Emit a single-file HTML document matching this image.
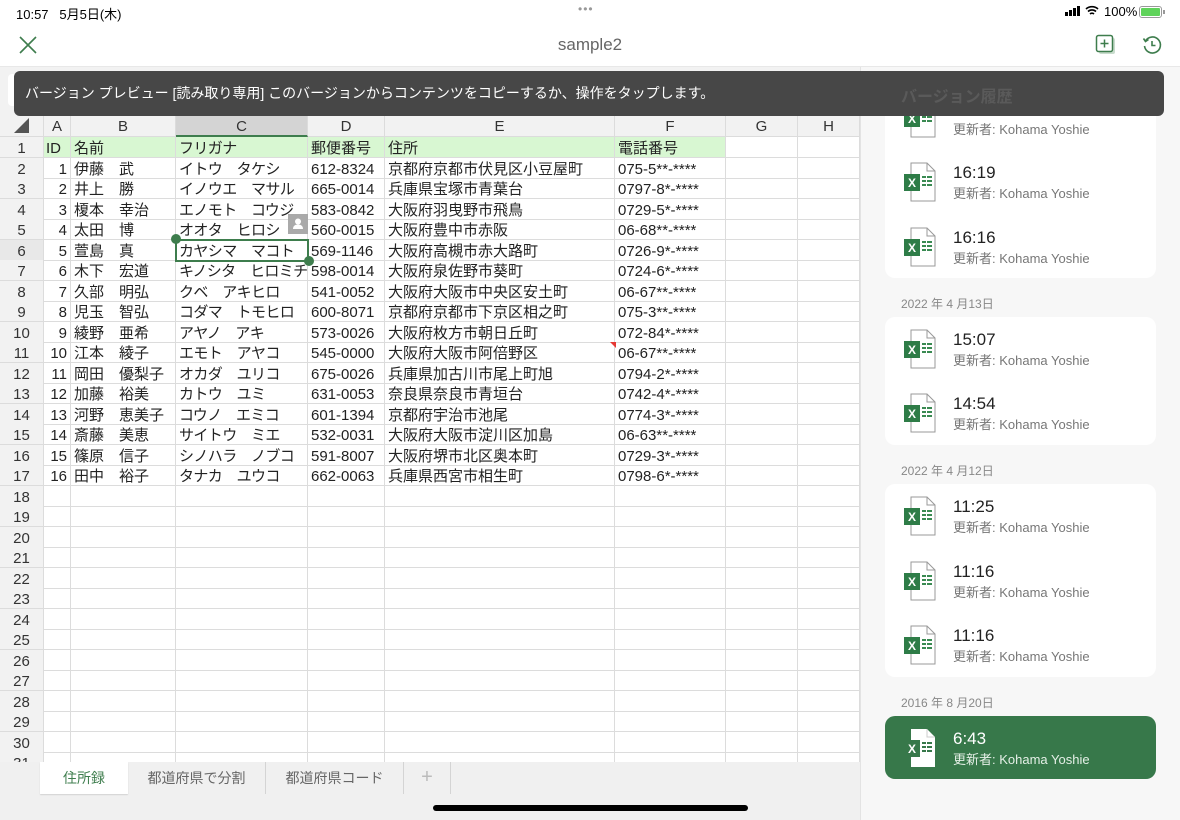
<!DOCTYPE html>
<html><head><meta charset="utf-8"><style>
*{box-sizing:border-box;margin:0;padding:0}
body{width:1180px;height:820px;overflow:hidden;background:#fff;font-family:"Liberation Sans","Noto Sans CJK JP",sans-serif;position:relative;color:#222}
.abs{position:absolute}
.row{position:absolute;left:0;height:21px;display:flex;width:860px}
.row div{height:21px;border-right:1px solid #dcdcdc;border-bottom:1px solid #dcdcdc;font-size:15px;line-height:24px;white-space:nowrap;overflow:hidden;padding-left:3px}
.c0{width:44px;background:#f2f2f2;text-align:center;padding-left:0!important;color:#333}
.c1{width:27px;text-align:right;padding-right:3px}
.c2{width:105px}.c3{width:132px;letter-spacing:-0.6px}.c4{width:77px}.c5{width:230px}.c6{width:111px}.c7{width:72px}.c8{width:62px}
.hdr div{background:#f2f2f2;text-align:center;padding-left:0;color:#333;height:22px;letter-spacing:0}
.g div{background:#d8f7d2}
.g div.c0,.g div.c7,.g div.c8{background:#fff}
.g div.c0{background:#f2f2f2}
.card{position:absolute;left:885px;width:271px;background:#fff;border-radius:10px}
.it{position:absolute;left:0;width:271px;height:64px}
.it .t{position:absolute;left:68px;top:13px;font-size:17px;color:#222}
.it .s{position:absolute;left:68px;top:33px;font-size:13px;color:#777}
.it svg{position:absolute;left:18px;top:12px}
.dt{position:absolute;left:901px;font-size:12px;color:#888}
</style></head><body>
<div class="abs" style="left:16px;top:4px;font-size:13px;color:#000">10:57&nbsp;&nbsp; 5月5日(木)</div>
<div class="abs" style="left:578px;top:2px;font-size:12px;color:#999;letter-spacing:1px">•••</div>
<div class="abs" style="left:1065px;top:6px;width:17px;height:10px">
<div class="abs" style="left:0;top:6px;width:3px;height:4px;background:#000"></div><div class="abs" style="left:4px;top:4px;width:3px;height:6px;background:#000"></div><div class="abs" style="left:8px;top:2px;width:3px;height:8px;background:#000"></div><div class="abs" style="left:12px;top:0;width:3px;height:10px;background:#000"></div></div>
<svg class="abs" style="left:1085px;top:5px" width="14" height="11" viewBox="0 0 14 11"><path d="M1 4a9 9 0 0 1 12 0M3 6.5a6 6 0 0 1 8 0M5 9a3 3 0 0 1 4 0" stroke="#000" stroke-width="1.6" fill="none"/></svg>
<div class="abs" style="left:1104px;top:4px;font-size:13px;color:#000">100%</div>
<div class="abs" style="left:1139px;top:6px;width:23px;height:12px;border:1px solid #999;border-radius:3px;padding:1px"><div style="width:100%;height:100%;background:#5fd35a;border-radius:1px"></div></div>
<div class="abs" style="left:1163px;top:10px;width:2px;height:4px;background:#999"></div>
<svg class="abs" style="left:19px;top:36px" width="18" height="18" viewBox="0 0 18 18"><path d="M1 1L17 17M17 1L1 17" stroke="#3e7d4d" stroke-width="1.6"/></svg>
<div class="abs" style="left:0;width:1180px;top:35px;text-align:center;font-size:17px;color:#666">sample2</div>
<svg class="abs" style="left:1095px;top:34px" width="22" height="22" viewBox="0 0 22 22"><rect x="4" y="4" width="16" height="16" rx="2" fill="#c9dccd"/><rect x="1.5" y="1.5" width="16" height="16" rx="2" fill="#fff" stroke="#3e7d4d" stroke-width="1.5"/><path d="M9.5 5.5v8M5.5 9.5h8" stroke="#3e7d4d" stroke-width="1.5"/></svg>
<svg class="abs" style="left:1142px;top:35px" width="20" height="20" viewBox="0 0 20 20"><path d="M3.5 6A8 8 0 1 1 2.5 11" stroke="#3e7d4d" stroke-width="1.6" fill="none"/><path d="M1.5 3.5l2 3 3-2" stroke="#3e7d4d" stroke-width="1.6" fill="none"/><path d="M10 6v4.5h3.5" stroke="#3e7d4d" stroke-width="1.6" fill="none"/></svg>
<div class="abs" style="left:0;top:66px;width:1180px;height:1px;background:#e8e8e8"></div>
<div class="abs" style="left:0;top:67px;width:860px;height:48px;background:#f2f2f2"></div>
<div class="abs" style="left:8px;top:74px;width:520px;height:32px;background:#fff;border-radius:4px"></div>
<div class="abs" style="left:0;top:115px;width:860px;height:647px;background:#fff;overflow:hidden">
<div class="row hdr" style="top:0"><div class="c0" style="color:#555">◢</div><div class="c1" style="text-align:center;padding:0">A</div><div class="c2">B</div><div class="c3" style="background:#d4d4d4;border-bottom:2px solid #3e7d4d">C</div><div class="c4">D</div><div class="c5">E</div><div class="c6">F</div><div class="c7">G</div><div class="c8">H</div></div>
<div class="row g" style="top:22px"><div class="c0">1</div><div class="c1" style="text-align:left;padding-left:2px">ID</div><div class="c2">名前</div><div class="c3">フリガナ</div><div class="c4">郵便番号</div><div class="c5">住所</div><div class="c6">電話番号</div><div class="c7"></div><div class="c8"></div></div>
<div class="row" style="top:42.5px"><div class="c0">2</div><div class="c1">1</div><div class="c2">伊藤　武</div><div class="c3">イトウ　タケシ</div><div class="c4">612-8324</div><div class="c5">京都府京都市伏見区小豆屋町</div><div class="c6">075-5**-****</div><div class="c7"></div><div class="c8"></div></div>
<div class="row" style="top:63px"><div class="c0">3</div><div class="c1">2</div><div class="c2">井上　勝</div><div class="c3">イノウエ　マサル</div><div class="c4">665-0014</div><div class="c5">兵庫県宝塚市青葉台</div><div class="c6">0797-8*-****</div><div class="c7"></div><div class="c8"></div></div>
<div class="row" style="top:83.5px"><div class="c0">4</div><div class="c1">3</div><div class="c2">榎本　幸治</div><div class="c3">エノモト　コウジ</div><div class="c4">583-0842</div><div class="c5">大阪府羽曳野市飛鳥</div><div class="c6">0729-5*-****</div><div class="c7"></div><div class="c8"></div></div>
<div class="row" style="top:104px"><div class="c0">5</div><div class="c1">4</div><div class="c2">太田　博</div><div class="c3">オオタ　ヒロシ</div><div class="c4">560-0015</div><div class="c5">大阪府豊中市赤阪</div><div class="c6">06-68**-****</div><div class="c7"></div><div class="c8"></div></div>
<div class="row" style="top:124.5px"><div class="c0" style="background:#e8e8e8">6</div><div class="c1">5</div><div class="c2">萱島　真</div><div class="c3">カヤシマ　マコト</div><div class="c4">569-1146</div><div class="c5">大阪府高槻市赤大路町</div><div class="c6">0726-9*-****</div><div class="c7"></div><div class="c8"></div></div>
<div class="row" style="top:145px"><div class="c0">7</div><div class="c1">6</div><div class="c2">木下　宏道</div><div class="c3">キノシタ　ヒロミチ</div><div class="c4">598-0014</div><div class="c5">大阪府泉佐野市葵町</div><div class="c6">0724-6*-****</div><div class="c7"></div><div class="c8"></div></div>
<div class="row" style="top:165.5px"><div class="c0">8</div><div class="c1">7</div><div class="c2">久部　明弘</div><div class="c3">クベ　アキヒロ</div><div class="c4">541-0052</div><div class="c5">大阪府大阪市中央区安土町</div><div class="c6">06-67**-****</div><div class="c7"></div><div class="c8"></div></div>
<div class="row" style="top:186px"><div class="c0">9</div><div class="c1">8</div><div class="c2">児玉　智弘</div><div class="c3">コダマ　トモヒロ</div><div class="c4">600-8071</div><div class="c5">京都府京都市下京区相之町</div><div class="c6">075-3**-****</div><div class="c7"></div><div class="c8"></div></div>
<div class="row" style="top:206.5px"><div class="c0">10</div><div class="c1">9</div><div class="c2">綾野　亜希</div><div class="c3">アヤノ　アキ</div><div class="c4">573-0026</div><div class="c5">大阪府枚方市朝日丘町</div><div class="c6">072-84*-****</div><div class="c7"></div><div class="c8"></div></div>
<div class="row" style="top:227px"><div class="c0">11</div><div class="c1" style="overflow:visible">10</div><div class="c2">江本　綾子</div><div class="c3">エモト　アヤコ</div><div class="c4">545-0000</div><div class="c5">大阪府大阪市阿倍野区</div><div class="c6">06-67**-****</div><div class="c7"></div><div class="c8"></div></div>
<div class="row" style="top:247.5px"><div class="c0">12</div><div class="c1">11</div><div class="c2">岡田　優梨子</div><div class="c3">オカダ　ユリコ</div><div class="c4">675-0026</div><div class="c5">兵庫県加古川市尾上町旭</div><div class="c6">0794-2*-****</div><div class="c7"></div><div class="c8"></div></div>
<div class="row" style="top:268px"><div class="c0">13</div><div class="c1">12</div><div class="c2">加藤　裕美</div><div class="c3">カトウ　ユミ</div><div class="c4">631-0053</div><div class="c5">奈良県奈良市青垣台</div><div class="c6">0742-4*-****</div><div class="c7"></div><div class="c8"></div></div>
<div class="row" style="top:288.5px"><div class="c0">14</div><div class="c1">13</div><div class="c2">河野　恵美子</div><div class="c3">コウノ　エミコ</div><div class="c4">601-1394</div><div class="c5">京都府宇治市池尾</div><div class="c6">0774-3*-****</div><div class="c7"></div><div class="c8"></div></div>
<div class="row" style="top:309px"><div class="c0">15</div><div class="c1">14</div><div class="c2">斎藤　美恵</div><div class="c3">サイトウ　ミエ</div><div class="c4">532-0031</div><div class="c5">大阪府大阪市淀川区加島</div><div class="c6">06-63**-****</div><div class="c7"></div><div class="c8"></div></div>
<div class="row" style="top:329.5px"><div class="c0">16</div><div class="c1">15</div><div class="c2">篠原　信子</div><div class="c3">シノハラ　ノブコ</div><div class="c4">591-8007</div><div class="c5">大阪府堺市北区奥本町</div><div class="c6">0729-3*-****</div><div class="c7"></div><div class="c8"></div></div>
<div class="row" style="top:350px"><div class="c0">17</div><div class="c1">16</div><div class="c2">田中　裕子</div><div class="c3">タナカ　ユウコ</div><div class="c4">662-0063</div><div class="c5">兵庫県西宮市相生町</div><div class="c6">0798-6*-****</div><div class="c7"></div><div class="c8"></div></div>
<div class="row" style="top:370.5px"><div class="c0">18</div><div class="c1"></div><div class="c2"></div><div class="c3"></div><div class="c4"></div><div class="c5"></div><div class="c6"></div><div class="c7"></div><div class="c8"></div></div>
<div class="row" style="top:391px"><div class="c0">19</div><div class="c1"></div><div class="c2"></div><div class="c3"></div><div class="c4"></div><div class="c5"></div><div class="c6"></div><div class="c7"></div><div class="c8"></div></div>
<div class="row" style="top:411.5px"><div class="c0">20</div><div class="c1"></div><div class="c2"></div><div class="c3"></div><div class="c4"></div><div class="c5"></div><div class="c6"></div><div class="c7"></div><div class="c8"></div></div>
<div class="row" style="top:432px"><div class="c0">21</div><div class="c1"></div><div class="c2"></div><div class="c3"></div><div class="c4"></div><div class="c5"></div><div class="c6"></div><div class="c7"></div><div class="c8"></div></div>
<div class="row" style="top:452.5px"><div class="c0">22</div><div class="c1"></div><div class="c2"></div><div class="c3"></div><div class="c4"></div><div class="c5"></div><div class="c6"></div><div class="c7"></div><div class="c8"></div></div>
<div class="row" style="top:473px"><div class="c0">23</div><div class="c1"></div><div class="c2"></div><div class="c3"></div><div class="c4"></div><div class="c5"></div><div class="c6"></div><div class="c7"></div><div class="c8"></div></div>
<div class="row" style="top:493.5px"><div class="c0">24</div><div class="c1"></div><div class="c2"></div><div class="c3"></div><div class="c4"></div><div class="c5"></div><div class="c6"></div><div class="c7"></div><div class="c8"></div></div>
<div class="row" style="top:514px"><div class="c0">25</div><div class="c1"></div><div class="c2"></div><div class="c3"></div><div class="c4"></div><div class="c5"></div><div class="c6"></div><div class="c7"></div><div class="c8"></div></div>
<div class="row" style="top:534.5px"><div class="c0">26</div><div class="c1"></div><div class="c2"></div><div class="c3"></div><div class="c4"></div><div class="c5"></div><div class="c6"></div><div class="c7"></div><div class="c8"></div></div>
<div class="row" style="top:555px"><div class="c0">27</div><div class="c1"></div><div class="c2"></div><div class="c3"></div><div class="c4"></div><div class="c5"></div><div class="c6"></div><div class="c7"></div><div class="c8"></div></div>
<div class="row" style="top:575.5px"><div class="c0">28</div><div class="c1"></div><div class="c2"></div><div class="c3"></div><div class="c4"></div><div class="c5"></div><div class="c6"></div><div class="c7"></div><div class="c8"></div></div>
<div class="row" style="top:596px"><div class="c0">29</div><div class="c1"></div><div class="c2"></div><div class="c3"></div><div class="c4"></div><div class="c5"></div><div class="c6"></div><div class="c7"></div><div class="c8"></div></div>
<div class="row" style="top:616.5px"><div class="c0">30</div><div class="c1"></div><div class="c2"></div><div class="c3"></div><div class="c4"></div><div class="c5"></div><div class="c6"></div><div class="c7"></div><div class="c8"></div></div>
<div class="row" style="top:637px"><div class="c0">31</div><div class="c1"></div><div class="c2"></div><div class="c3"></div><div class="c4"></div><div class="c5"></div><div class="c6"></div><div class="c7"></div><div class="c8"></div></div>
</div>
<div class="abs" style="left:175px;top:239px;width:134px;height:23px;border:2px solid #3e7d4d"></div>
<div class="abs" style="left:171px;top:234px;width:10px;height:10px;border-radius:50%;background:#3e7d4d"></div>
<div class="abs" style="left:304px;top:256px;width:10px;height:10px;border-radius:50%;background:#3e7d4d"></div>
<div class="abs" style="left:288px;top:214px;width:20px;height:20px;background:#aaa"><svg width="20" height="20" viewBox="0 0 20 20"><circle cx="10" cy="7.5" r="3" fill="#fff"/><path d="M5 15c0-3 2-4.5 5-4.5s5 1.5 5 4.5z" fill="#fff"/></svg></div>
<div class="abs" style="left:610px;top:342px;width:0;height:0;border-left:6px solid transparent;border-top:6px solid #e53935"></div>
<div class="abs" style="left:0;top:762px;width:860px;height:58px;background:#f0f0f0"></div>
<div class="abs" style="left:40px;top:762px;width:88px;height:32px;background:#fff;box-shadow:0 1px 1px rgba(0,0,0,.12);text-align:center;line-height:32px;font-size:14px;color:#3e7d4d">住所録</div>
<div class="abs" style="left:128px;top:762px;width:138px;height:32px;border-right:1px solid #d4d4d4;text-align:center;line-height:32px;font-size:14px;color:#666">都道府県で分割</div>
<div class="abs" style="left:266px;top:762px;width:138px;height:32px;border-right:1px solid #d4d4d4;text-align:center;line-height:32px;font-size:14px;color:#666">都道府県コード</div>
<div class="abs" style="left:404px;top:762px;width:47px;height:32px;border-right:1px solid #d4d4d4;text-align:center;line-height:30px;font-size:20px;color:#bbb">+</div>
<div class="abs" style="left:860px;top:67px;width:320px;height:753px;background:#f7f7f7;border-left:1px solid #e3e3e3"></div>
<div class="card" style="top:86px;height:192px">
<div class="it" style="top:0"><svg width="38" height="40" viewBox="0 0 38 40"><path d="M8 1h16l8 8v30H8z" fill="#fff" stroke="#999"/><path d="M24 1v8h8" fill="none" stroke="#999"/><rect x="1" y="12" width="16" height="17" fill="#2e7c47"/><text x="9" y="25" font-size="12" font-weight="bold" fill="#fff" text-anchor="middle" font-family="Liberation Sans">X</text><path d="M19 14h4v2h-4zM24 14h5v2h-5zM19 18h4v2h-4zM24 18h5v2h-5zM19 22h4v2h-4zM24 22h5v2h-5z" fill="#3a8a52"/></svg><div class="t">16:28</div><div class="s">更新者: Kohama Yoshie</div></div>
<div class="it" style="top:64px"><svg width="38" height="40" viewBox="0 0 38 40"><path d="M8 1h16l8 8v30H8z" fill="#fff" stroke="#999"/><path d="M24 1v8h8" fill="none" stroke="#999"/><rect x="1" y="12" width="16" height="17" fill="#2e7c47"/><text x="9" y="25" font-size="12" font-weight="bold" fill="#fff" text-anchor="middle" font-family="Liberation Sans">X</text><path d="M19 14h4v2h-4zM24 14h5v2h-5zM19 18h4v2h-4zM24 18h5v2h-5zM19 22h4v2h-4zM24 22h5v2h-5z" fill="#3a8a52"/></svg><div class="t">16:19</div><div class="s">更新者: Kohama Yoshie</div></div>
<div class="it" style="top:129px"><svg width="38" height="40" viewBox="0 0 38 40"><path d="M8 1h16l8 8v30H8z" fill="#fff" stroke="#999"/><path d="M24 1v8h8" fill="none" stroke="#999"/><rect x="1" y="12" width="16" height="17" fill="#2e7c47"/><text x="9" y="25" font-size="12" font-weight="bold" fill="#fff" text-anchor="middle" font-family="Liberation Sans">X</text><path d="M19 14h4v2h-4zM24 14h5v2h-5zM19 18h4v2h-4zM24 18h5v2h-5zM19 22h4v2h-4zM24 22h5v2h-5z" fill="#3a8a52"/></svg><div class="t">16:16</div><div class="s">更新者: Kohama Yoshie</div></div>
</div>
<div class="dt" style="top:295px">2022 年 4 月13日</div>
<div class="card" style="top:317px;height:128px">
<div class="it" style="top:0"><svg width="38" height="40" viewBox="0 0 38 40"><path d="M8 1h16l8 8v30H8z" fill="#fff" stroke="#999"/><path d="M24 1v8h8" fill="none" stroke="#999"/><rect x="1" y="12" width="16" height="17" fill="#2e7c47"/><text x="9" y="25" font-size="12" font-weight="bold" fill="#fff" text-anchor="middle" font-family="Liberation Sans">X</text><path d="M19 14h4v2h-4zM24 14h5v2h-5zM19 18h4v2h-4zM24 18h5v2h-5zM19 22h4v2h-4zM24 22h5v2h-5z" fill="#3a8a52"/></svg><div class="t">15:07</div><div class="s">更新者: Kohama Yoshie</div></div>
<div class="it" style="top:64px"><svg width="38" height="40" viewBox="0 0 38 40"><path d="M8 1h16l8 8v30H8z" fill="#fff" stroke="#999"/><path d="M24 1v8h8" fill="none" stroke="#999"/><rect x="1" y="12" width="16" height="17" fill="#2e7c47"/><text x="9" y="25" font-size="12" font-weight="bold" fill="#fff" text-anchor="middle" font-family="Liberation Sans">X</text><path d="M19 14h4v2h-4zM24 14h5v2h-5zM19 18h4v2h-4zM24 18h5v2h-5zM19 22h4v2h-4zM24 22h5v2h-5z" fill="#3a8a52"/></svg><div class="t">14:54</div><div class="s">更新者: Kohama Yoshie</div></div>
</div>
<div class="dt" style="top:462px">2022 年 4 月12日</div>
<div class="card" style="top:484px;height:193px">
<div class="it" style="top:0"><svg width="38" height="40" viewBox="0 0 38 40"><path d="M8 1h16l8 8v30H8z" fill="#fff" stroke="#999"/><path d="M24 1v8h8" fill="none" stroke="#999"/><rect x="1" y="12" width="16" height="17" fill="#2e7c47"/><text x="9" y="25" font-size="12" font-weight="bold" fill="#fff" text-anchor="middle" font-family="Liberation Sans">X</text><path d="M19 14h4v2h-4zM24 14h5v2h-5zM19 18h4v2h-4zM24 18h5v2h-5zM19 22h4v2h-4zM24 22h5v2h-5z" fill="#3a8a52"/></svg><div class="t">11:25</div><div class="s">更新者: Kohama Yoshie</div></div>
<div class="it" style="top:65px"><svg width="38" height="40" viewBox="0 0 38 40"><path d="M8 1h16l8 8v30H8z" fill="#fff" stroke="#999"/><path d="M24 1v8h8" fill="none" stroke="#999"/><rect x="1" y="12" width="16" height="17" fill="#2e7c47"/><text x="9" y="25" font-size="12" font-weight="bold" fill="#fff" text-anchor="middle" font-family="Liberation Sans">X</text><path d="M19 14h4v2h-4zM24 14h5v2h-5zM19 18h4v2h-4zM24 18h5v2h-5zM19 22h4v2h-4zM24 22h5v2h-5z" fill="#3a8a52"/></svg><div class="t">11:16</div><div class="s">更新者: Kohama Yoshie</div></div>
<div class="it" style="top:129px"><svg width="38" height="40" viewBox="0 0 38 40"><path d="M8 1h16l8 8v30H8z" fill="#fff" stroke="#999"/><path d="M24 1v8h8" fill="none" stroke="#999"/><rect x="1" y="12" width="16" height="17" fill="#2e7c47"/><text x="9" y="25" font-size="12" font-weight="bold" fill="#fff" text-anchor="middle" font-family="Liberation Sans">X</text><path d="M19 14h4v2h-4zM24 14h5v2h-5zM19 18h4v2h-4zM24 18h5v2h-5zM19 22h4v2h-4zM24 22h5v2h-5z" fill="#3a8a52"/></svg><div class="t">11:16</div><div class="s">更新者: Kohama Yoshie</div></div>
</div>
<div class="dt" style="top:694px">2016 年 8 月20日</div>
<div class="card" style="top:716px;height:63px;background:#37784a">
<div class="it" style="top:0"><svg width="38" height="40" viewBox="0 0 38 40"><path d="M8 1h16l8 8v30H8z" fill="#fff"/><path d="M24 1v8h8" fill="none" stroke="#ccc"/><rect x="1" y="12" width="16" height="17" fill="#37784a"/><text x="9" y="25" font-size="12" font-weight="bold" fill="#fff" text-anchor="middle" font-family="Liberation Sans">X</text><path d="M19 14h4v2h-4zM24 14h5v2h-5zM19 18h4v2h-4zM24 18h5v2h-5zM19 22h4v2h-4zM24 22h5v2h-5z" fill="#37784a"/></svg><div class="t" style="color:#fff">6:43</div><div class="s" style="color:#e4efe6">更新者: Kohama Yoshie</div></div>
</div>
<div class="abs" style="left:14px;top:71px;width:1150px;height:45px;background:#474747;border-radius:6px;overflow:hidden">
<div class="abs" style="left:887px;top:12px;font-size:16px;font-weight:bold;color:#5a5a5a">バージョン履歴</div>
<div class="abs" style="left:11px;top:0;color:#fff;font-size:14px;line-height:45px">バージョン プレビュー [読み取り専用] このバージョンからコンテンツをコピーするか、操作をタップします。</div>
</div>
<div class="abs" style="left:433px;top:805px;width:315px;height:6px;border-radius:3px;background:#000"></div>
</body></html>
